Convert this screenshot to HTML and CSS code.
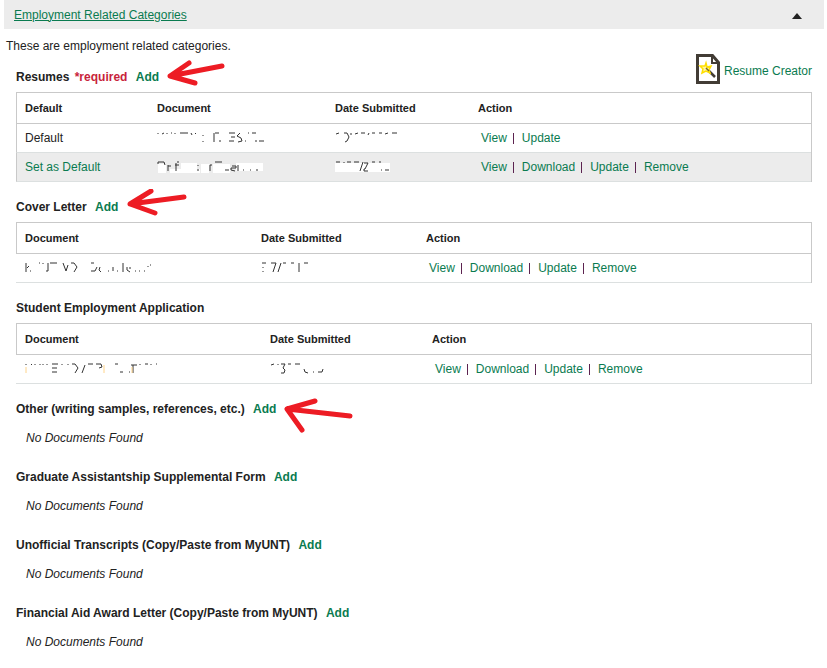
FILE: index.html
```html
<!DOCTYPE html>
<html lang="en">
<head>
<meta charset="utf-8">
<title>Employment Related Categories</title>
<link rel="stylesheet" href="styles.css">
</head>
<body>
<header class="bar">
  <a class="bar-title" href="#categories">Employment Related Categories</a>
  <button class="collapse" type="button" aria-label="Collapse"><svg width="10" height="6" viewBox="0 0 10 6"><path d="M0 6 5 0l5 6z" fill="#222"/></svg></button>
</header>
<main id="categories">
  <div class="top">
    <div>
      <p class="intro">These are employment related categories.</p>
      <h2>Resumes <span class="required">*required</span> <a href="#add">Add</a>
        <svg class="arrow" width="62" height="32" viewBox="0 0 62 32"><path d="M55 7 3 17 22 4M3 17l25 7"/></svg></h2>
    </div>
    <a class="creator" href="#creator">
      <svg width="24" height="30" viewBox="0 0 24 30"><path d="M1.500 1.500h15l6 7v20h-21z" fill="#fff" stroke="#423c35" stroke-width="3"/><path d="M16 2v7h6" fill="none" stroke="#423c35" stroke-width="2"/><path d="m11 15 8 8" stroke="#423c35" stroke-width="2.500"/><path d="m10 9 1 4 4-1-2 4 1 3-4-2-4 2 1-4-3-3h5z" fill="#fff3a0" stroke="#ffdf00" stroke-width="1.500"/><path d="m10 14 3 3" stroke="#7d6c20" stroke-width="1.500"/></svg>
      <span>Resume Creator</span>
    </a>
  </div>
  <table class="boxed resumes">
    <thead><tr><th class="c1">Default</th><th class="c2">Document</th><th class="c3">Date Submitted</th><th>Action</th></tr></thead>
    <tbody>
      <tr><td>Default</td>
        <td><svg class="scrap" width="110" height="12" viewBox="0 0 110 12"><path d="M1 1v1M5 2l2-1M10 1v1M14 1h1M18 1v1M23 1h8M34 1l1 2M38 1l1 1M46 3v1M46 9v1M57 1v9M58 1h4M62 9h2M72 1h6M74 5h4M72 9h5M83 1l-3 3 4 2 1 3-4 1M88 9h1M91 1h1M95 1h4M98 9h2M102 9h5"/></svg></td>
        <td><svg class="scrap" width="70" height="12" viewBox="0 0 70 12"><path d="M1 2l3-1M9 1h3l2 4-2 4-2 1M16 1v2M20 2l3-1M26 1h4M34 1l-1 2M37 1h3M44 1h3M50 2l3-1M57 1h5"/></svg></td>
        <td class="actions"><a href="#v">View</a><i></i><a href="#u">Update</a></td></tr>
      <tr class="alt"><td><a href="#s">Set as Default</a></td>
        <td><svg class="scrap" width="110" height="12" viewBox="0 0 110 12"><path class="wipe" d="M1 3h8v9H1zM13 8h30v4H13zM24 2h16v9H24zM44 3h8v9h-8zM56 3h17v9H56zM79 2h27v8H79z"/><path d="M1 1h6l1 3M1 1v2M11 4v6M11 5h3M19 2v8M18 4h4M20 1h2M41 4v1M41 8v2M53 4v6M53 4h2M58 1h7M68 9h4M75 5h4v2h-5v2l4 1M81 4v6M86 9h1M93 9h1M99 9h2"/></svg></td>
        <td><svg class="scrap" width="70" height="12" viewBox="0 0 70 12"><path class="wipe" d="M0 2h55v9H0z"/><path d="M1 1h4M9 1v1M12 1h4M19 1h5M28 1l-3 9M29 2h4l-3 6h-1v2h4M37 1h3M44 1h2M46 9h1M50 9h4"/></svg></td>
        <td class="actions"><a href="#v">View</a><i></i><a href="#d">Download</a><i></i><a href="#u">Update</a><i></i><a href="#r">Remove</a></td></tr>
    </tbody>
  </table>

  <h2>Cover Letter <a href="#add">Add</a>
    <svg class="arrow" width="62" height="32" viewBox="0 0 62 32"><path d="M58 8 4 15 25 2M4 15l25 9"/></svg></h2>
  <table class="letters">
    <thead><tr><th class="c1">Document</th><th class="c2">Date Submitted</th><th>Action</th></tr></thead>
    <tbody><tr>
      <td><svg class="scrap" width="130" height="12" viewBox="0 0 130 12"><path d="M1 1v9M2 6l2-2M5 9h1M14 1h1M18 1v1M23 1v8h-2M25 1h7M38 1l3 8 2-6M46 1h3l3 4-3 5M66 1h3M66 9h4l2-4M75 5l-1 3 2 2M83 9h1M88 5v4M92 9h1M98 1v9M102 5v3l3 2M105 5v2M110 9h1M114 9h1M119 9h1M123 4v1M125 3h1"/></svg></td>
      <td><svg class="scrap" width="70" height="12" viewBox="0 0 70 12"><path d="M1 1h4M2 5v1M2 9v1M10 1h5l-3 9M20 1l-3 9M22 1h3M30 1h3M38 1v9M43 1h4"/></svg></td>
      <td class="actions"><a href="#v">View</a><i></i><a href="#d">Download</a><i></i><a href="#u">Update</a><i></i><a href="#r">Remove</a></td>
    </tr></tbody>
  </table>

  <h2>Student Employment Application</h2>
  <table class="applications">
    <thead><tr><th class="c1">Document</th><th class="c2">Date Submitted</th><th>Action</th></tr></thead>
    <tbody><tr>
      <td><svg class="scrap" width="140" height="12" viewBox="0 0 140 12"><path d="M1 1v1M6 2l1-1M10 1v1M15 1v1M18 1v1M22 1v1M27 1h6M27 5h5M27 9h5M37 1v1M43 1v1M47 1h3l3 4-3 5M60 2l-3 8M63 1h5M71 1h5l1 3-3 1M90 1h3M95 9h3M104 9h1M106 2h6M108 2v8M115 1v1M120 1h3M126 1v1M131 1h1"/><path class="fringe" d="M1 4v6M79 2v8M107 4v6"/></svg></td>
      <td><svg class="scrap" width="70" height="12" viewBox="0 0 70 12"><path d="M1 2l3-1M8 1v1M11 1h4l-2 4 2 2-1 3h-3M18 1h3M25 1h5M34 6l1 3 3 1M43 9h1M48 9h4l1-3"/></svg></td>
      <td class="actions"><a href="#v">View</a><i></i><a href="#d">Download</a><i></i><a href="#u">Update</a><i></i><a href="#r">Remove</a></td>
    </tr></tbody>
  </table>

  <section>
    <h2>Other (writing samples, references, etc.) <a href="#add">Add</a>
      <svg class="arrow low" width="72" height="36" viewBox="0 0 72 36"><path d="M66 18 3 11 31 3M3 11l15 21"/></svg></h2>
    <p class="empty">No Documents Found</p>
  </section>
  <section>
    <h2>Graduate Assistantship Supplemental Form <a href="#add">Add</a></h2>
    <p class="empty">No Documents Found</p>
  </section>
  <section>
    <h2>Unofficial Transcripts (Copy/Paste from MyUNT) <a href="#add">Add</a></h2>
    <p class="empty">No Documents Found</p>
  </section>
  <section>
    <h2>Financial Aid Award Letter (Copy/Paste from MyUNT) <a href="#add">Add</a></h2>
    <p class="empty">No Documents Found</p>
  </section>
</main>
</body>
</html>
```
FILE: styles.css
```css
* { box-sizing: border-box; }
body {
  margin: 0 3px 0 4px;
  background: #fff;
  color: #222;
  font: 12px/18px "Liberation Sans", Arial, sans-serif;
}
a { color: #0a7b50; text-decoration: none; }
.bar {
  display: flex;
  align-items: center;
  justify-content: space-between;
  height: 29px;
  padding: 0 22px 0 10px;
  background: #ececec;
}
.bar-title { text-decoration: underline; }
.collapse { display: flex; padding: 2px 0 0; border: 0; background: none; }
main { padding: 8px 12px 0; }
.top { display: flex; justify-content: space-between; align-items: flex-end; }
.intro { margin: 0 0 13px -10px; }
.top h2 { margin-top: 0; }
.creator { display: flex; align-items: center; gap: 4px; margin-bottom: 8px; }
.creator svg { display: block; }
.creator span { padding-top: 4px; }
h2 { position: relative; width: fit-content; margin: 16px 0 6px; font-size: 12px; line-height: 18px; }
h2 a { margin-left: 5px; }
.required { margin-left: 2px; color: #c8233a; }
.arrow { position: absolute; left: 100%; top: -9px; margin-left: 8px; }
.arrow.low { top: -2px; }
.arrow path { fill: none; stroke: #ed1c24; stroke-width: 5; stroke-linecap: round; stroke-linejoin: round; }
table { width: 100%; table-layout: fixed; border-collapse: separate; border-spacing: 0; border-right: 1px solid #c9c9c9; }
th, td { padding: 0 8px; text-align: left; }
th { height: 32px; border-top: 1px solid #c9c9c9; border-bottom: 1px solid #c9c9c9; font-size: 11px; }
th:first-child, .boxed td:first-child { border-left: 1px solid #c9c9c9; }
td { height: 29px; border-bottom: 1px solid #dce0e0; }
td:first-child { padding-left: 9px; }
.boxed td:first-child { padding-left: 8px; }
.alt td { background: #ececec; }
.resumes .c1 { width: 133px; }
.resumes .c2 { width: 178px; }
.resumes .c3 { width: 143px; }
.letters .c1 { width: 237px; }
.letters .c2 { width: 165px; }
.applications .c1 { width: 246px; }
.applications .c2 { width: 162px; }
td.actions { padding-left: 11px; }
.actions i { display: inline-block; width: 1px; height: 11px; margin: 0 8px 0 6px; background: #5c2350; vertical-align: -2px; }
.scrap { display: block; }
.scrap path { fill: none; stroke: #333; stroke-width: 1; }
.scrap .wipe { fill: #fff; stroke: none; }
.scrap .fringe { stroke: #ffd48a; }
section { margin-bottom: 21px; }
.empty { margin: 11px 0 0 10px; font-style: italic; }
```
